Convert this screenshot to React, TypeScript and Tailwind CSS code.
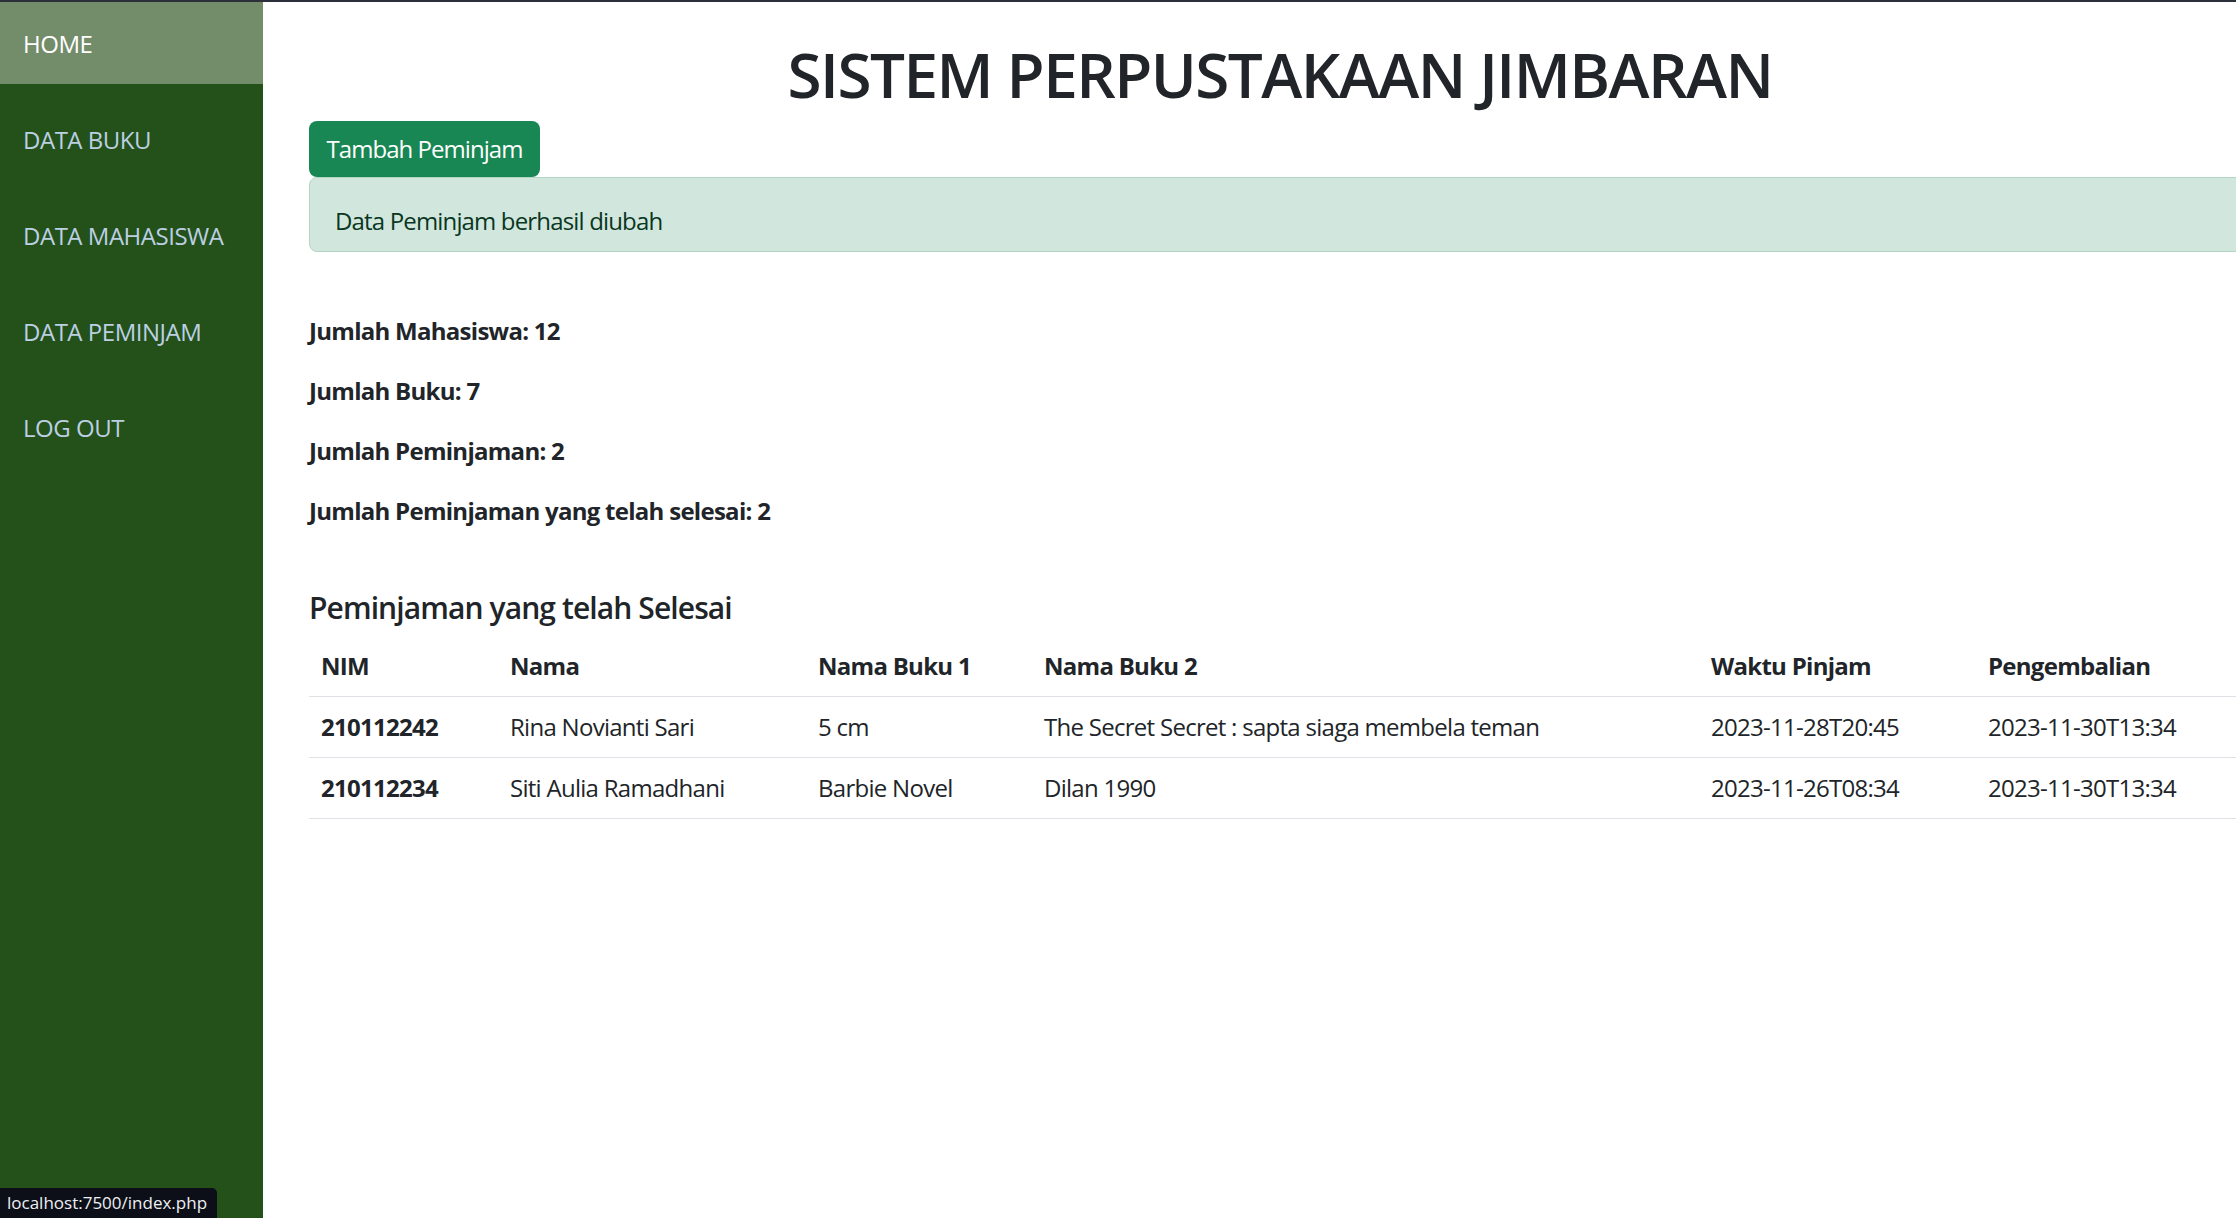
import React from "react";

const menu = ["HOME", "DATA BUKU", "DATA MAHASISWA", "DATA PEMINJAM", "LOG OUT"];

const rows = [
  {
    nim: "210112242",
    nama: "Rina Novianti Sari",
    b1: "5 cm",
    b2: "The Secret Secret : sapta siaga membela teman",
    pinjam: "2023-11-28T20:45",
    kembali: "2023-11-30T13:34",
  },
  {
    nim: "210112234",
    nama: "Siti Aulia Ramadhani",
    b1: "Barbie Novel",
    b2: "Dilan 1990",
    pinjam: "2023-11-26T08:34",
    kembali: "2023-11-30T13:34",
  },
];

const stats = [
  "Jumlah Mahasiswa: 12",
  "Jumlah Buku: 7",
  "Jumlah Peminjaman: 2",
  "Jumlah Peminjaman yang telah selesai: 2",
];

export default function App() {
  return (
    <div
      className="relative w-[2236px] h-[1218px] overflow-hidden bg-white text-[#212529] border-t-[2px] border-[#2b303a]"
      style={{ fontFamily: '"Open Sans", "Noto Sans", sans-serif' }}
    >
      <div className="flex h-full">
        <aside className="w-[263px] shrink-0 bg-[#235119] h-full">
          {menu.map((m, i) => (
            <div
              key={m}
              className={`h-[82px] mb-[14px] flex items-center pl-[23px] pt-[1px] text-[24px] tracking-[-0.02em] ${
                i === 0 ? "bg-[#738c69] text-white" : "text-[#bccfe3]"
              }`}
            >
              {m}
            </div>
          ))}
        </aside>
        <main className="flex-1 min-w-0">
          <div className="ml-[46px] w-[1942px]">
            <h1 className="text-center text-[62px] font-semibold leading-[1.2] pt-[35px] pb-[10px] tracking-[-0.025em]">
              SISTEM PERPUSTAKAAN JIMBARAN
            </h1>
            <button className="h-[56px] w-[231px] rounded-[8px] bg-[#198754] text-white text-[24px] tracking-[-0.04em] block">
              Tambah Peminjam
            </button>
            <div className="h-[75px] rounded-l-[8px] border border-[#b3d5c4] bg-[#d1e7dd] text-[#0a3622] text-[24px] flex items-center pl-[25px] pt-[12px] tracking-[-0.035em]">
              Data Peminjam berhasil diubah
            </div>
            <div className="pt-[61px]">
              {stats.map((s) => (
                <p key={s} className="font-bold text-[24px] leading-[36px] mb-[24px] tracking-[-0.03em]">
                  {s}
                </p>
              ))}
            </div>
            <h5 className="text-[30px] font-semibold leading-[36px] mt-[61px] mb-[10px] tracking-[-0.03em]">
              Peminjaman yang telah Selesai
            </h5>
            <table className="table-fixed w-[1942px] text-[24px] leading-[36px] border-collapse tracking-[-0.03em]">
              <colgroup>
                <col className="w-[189px]" />
                <col className="w-[308px]" />
                <col className="w-[226px]" />
                <col className="w-[667px]" />
                <col className="w-[277px]" />
                <col className="w-[275px]" />
              </colgroup>
              <thead>
                <tr className="border-b border-[#dee2e6]">
                  {["NIM", "Nama", "Nama Buku 1", "Nama Buku 2", "Waktu Pinjam", "Pengembalian"].map((h) => (
                    <th key={h} className="text-left font-bold px-[12px] py-[12px]">
                      {h}
                    </th>
                  ))}
                </tr>
              </thead>
              <tbody>
                {rows.map((r) => (
                  <tr key={r.nim} className="border-b border-[#dee2e6]">
                    <th className="text-left font-bold px-[12px] py-[12px]">{r.nim}</th>
                    <td className="px-[12px] py-[12px] whitespace-nowrap">{r.nama}</td>
                    <td className="px-[12px] py-[12px] whitespace-nowrap">{r.b1}</td>
                    <td className="px-[12px] py-[12px] whitespace-nowrap">{r.b2}</td>
                    <td className="px-[12px] py-[12px] whitespace-nowrap">{r.pinjam}</td>
                    <td className="px-[12px] py-[12px] whitespace-nowrap">{r.kembali}</td>
                  </tr>
                ))}
              </tbody>
            </table>
          </div>
        </main>
      </div>
      <div className="absolute left-0 bottom-0 h-[30px] w-[217px] bg-[#0c0e18] rounded-tr-[5px] text-[#eef0f3] text-[17px] flex items-center pl-[7px]">
        localhost:7500/index.php
      </div>
    </div>
  );
}
